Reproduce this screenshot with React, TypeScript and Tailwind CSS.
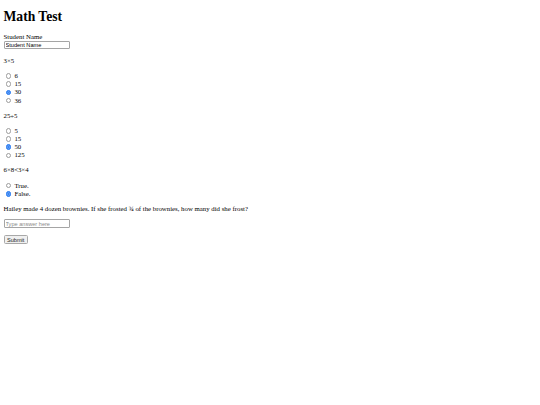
import React from "react";

const opts = (name: string, items: string[], checked: string) => (
  <div className="my-[7px]">
    {items.map((it) => (
      <label key={it} className="flex items-center h-[8.2px]">
        <input
          type="radio"
          name={name}
          defaultChecked={it === checked}
          className="appearance-none shrink-0 w-[5.6px] h-[5.6px] rounded-full border-[0.8px] border-[#9d9d9d] bg-white ml-[2.3px] mr-[3px] my-0 checked:bg-[#2f7ff0] checked:border-[#2f7ff0] checked:shadow-[inset_0_0_0_1px_#5d9cf5]"
        />
        <span>{it}</span>
      </label>
    ))}
  </div>
);

export default function App() {
  return (
    <div className="px-[3.5px] pb-[3.5px] bg-white min-h-[405px] text-[6.8px] leading-[8px] text-black font-['Liberation_Serif',serif] antialiased">
      <h1 className="text-[13.6px] leading-[16px] font-bold mt-[9.4px] mb-[7.6px]">Math Test</h1>
      <div>
        <label>Student Name</label>
        <br />
        <input
          type="text"
          defaultValue="Student Name"
          className="block w-[66px] h-[8.5px] border-[0.8px] border-[#a5a5a5] rounded-[1px] px-[1px] text-[5.6px] leading-[6px] font-['Liberation_Sans',sans-serif] text-black outline-none"
        />
      </div>
      <p className="mt-[7.5px] mb-[7px]">3×5</p>
      {opts("q1", ["6", "15", "30", "36"], "30")}
      <p className="my-[6.5px]">25÷5</p>
      {opts("q2", ["5", "15", "50", "125"], "50")}
      <p className="my-[7px]">6×8&lt;3×4</p>
      {opts("q3", ["True.", "False."], "False.")}
      <p className="mt-[5px] mb-[6.5px]">Hailey made 4 dozen brownies. If she frosted ¾ of the brownies, how many did she frost?</p>
      <input
        type="text"
        placeholder="Type answer here"
        className="block w-[66px] h-[8.5px] border-[0.8px] border-[#a5a5a5] rounded-[1px] px-[1px] text-[5.6px] leading-[6px] font-['Liberation_Sans',sans-serif] placeholder:text-[#8a8a8a] outline-none"
      />
      <button className="block mt-[7.5px] h-[8.5px] px-[2.5px] text-[5.6px] leading-[6px] font-['Liberation_Sans',sans-serif] text-[#222] bg-[#f0f0f0] border-[0.8px] border-[#a8a8a8] rounded-[1.5px]">
        Submit
      </button>
    </div>
  );
}
